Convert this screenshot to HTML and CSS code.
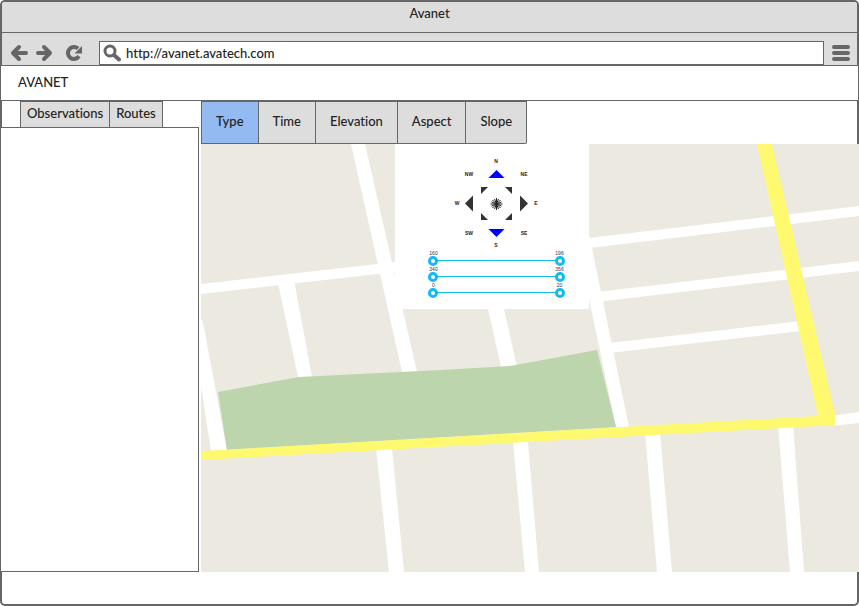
FILE: index.html
```html
<!DOCTYPE html>
<html lang="en">
<head>
<meta charset="utf-8">
<title>Avanet</title>
<link rel="stylesheet" href="styles.css">
</head>
<body>
<div class="window">
  <div class="titlebar">Avanet</div>
  <div class="toolbar">
    <button class="icon-button" type="button" aria-label="Back">
      <svg width="18" height="18" viewBox="0 0 18 18"><path d="M9 3 3 9l6 6M4 9h12" class="arrow"/></svg>
    </button>
    <button class="icon-button" type="button" aria-label="Forward">
      <svg width="18" height="18" viewBox="0 0 18 18"><path d="M9 3l6 6-6 6M14 9H3" class="arrow"/></svg>
    </button>
    <button class="icon-button reload" type="button" aria-label="Reload">
      <svg width="18" height="18" viewBox="0 0 18 18"><path d="M13 4.500A6 6 0 1 0 14 12.200" class="loop"/><path d="M17 2v7.500H9.500z" class="solid"/></svg>
    </button>
    <div class="address">
      <svg width="18" height="18" viewBox="0 0 18 18"><circle cx="7" cy="7" r="5" class="lens"/><path d="m11 11 5 4.500" class="handle"/></svg>
      <input type="text" aria-label="Address" value="http://avanet.avatech.com">
    </div>
    <button class="icon-button" type="button" aria-label="Menu">
      <svg width="18" height="18" viewBox="0 0 18 18"><path d="M2 3h14M2 9h14M2 15h14" class="bars"/></svg>
    </button>
  </div>
  <header class="site-header">AVANET</header>
  <main class="workspace">
    <aside class="sidebar">
      <nav class="side-tabs">
        <button class="side-tab" type="button">Observations</button>
        <button class="side-tab" type="button">Routes</button>
      </nav>
      <div class="side-panel"></div>
    </aside>
    <section class="content">
      <nav class="filter-tabs">
        <button class="filter-tab active" type="button">Type</button>
        <button class="filter-tab" type="button">Time</button>
        <button class="filter-tab" type="button">Elevation</button>
        <button class="filter-tab" type="button">Aspect</button>
        <button class="filter-tab" type="button">Slope</button>
      </nav>
      <div class="map">
        <svg class="map-drawing" viewBox="0 0 658 428" preserveAspectRatio="xMinYMin slice" role="img" aria-label="Street map">
          <rect width="658" height="428" fill="#ece9e1"/>
          <g fill="#fff">
            <path d="M150 0h14l52 228h-15z"/>
            <path d="M0 140 194 118v10L0 150z"/>
            <path d="M77 139l16-3 18 97H97z"/>
            <path d="M0 175l2 3 24 129H10L0 242z"/>
            <path d="M287 165h16l13 58h-16z"/>
            <path d="M388 90l40 193h-13L388 155z"/>
            <path d="M388 94 658 62v10L388 104z"/>
            <path d="M396 148 658 117v10L396 158z"/>
            <path d="M408 199 600 177v10L408 209z"/>
            <path d="M175 304h16l12 124h-15z"/>
            <path d="M312 298h15l11 130h-14z"/>
            <path d="M444 288h15l12 140h-15z"/>
            <path d="M577 280h15l11 148h-14z"/>
            <path d="M630 272l28-4v11l-28 3z"/>
          </g>
          <path d="M17 248 98 233 240 226l69-4 87-16 19 77L26 306z" fill="#bcd5ac"/>
          <path d="M0 307 617 272 556 0h15l63 270v12l-16 0L0 316z" fill="#fff96f"/>
        </svg>
        <div class="filter-panel">
          <svg class="compass" width="194" height="106" viewBox="0 0 194 106" role="img" aria-label="Aspect compass">
            <g fill="#00f"><path d="M101.500 26 109.500 34h-16z"/><path d="M93.500 85h16l-8 8z"/></g>
            <g fill="#333">
              <path d="M70 59.500 78 51.500v16z"/><path d="M133 59.500 125 51.500v16z"/>
              <path d="M86 43h7l-7 7z"/><path d="M110 43h7v7z"/><path d="M86 69v7h7z"/><path d="M117 69v7h-7z"/>
            </g>
            <path d="M101.500 54v12M95.500 60h12M97.500 56l8 8M105.500 56l-8 8M99.500 55l4 10M103.500 55l-4 10M96.500 58l10 4M96.500 62l10-4" class="star"/>
            <g class="points">
              <text x="101" y="19">N</text><text x="74" y="32">NW</text><text x="129" y="32">NE</text>
              <text x="62" y="61">W</text><text x="141" y="61">E</text>
              <text x="74" y="91">SW</text><text x="129" y="91">SE</text><text x="101" y="103">S</text>
            </g>
          </svg>
          <div class="ranges">
            <div class="range"><span>160</span><span>196</span><input type="range" min="160" max="196" value="160" aria-label="First range, from"><input type="range" min="160" max="196" value="196" aria-label="First range, to"></div>
            <div class="range"><span>340</span><span>356</span><input type="range" min="340" max="356" value="340" aria-label="Second range, from"><input type="range" min="340" max="356" value="356" aria-label="Second range, to"></div>
            <div class="range"><span>0</span><span>20</span><input type="range" min="0" max="20" value="0" aria-label="Third range, from"><input type="range" min="0" max="20" value="20" aria-label="Third range, to"></div>
          </div>
        </div>
      </div>
    </section>
  </main>
</div>
</body>
</html>
```
FILE: styles.css
```css
* { box-sizing: border-box; }

body {
  margin: 0;
  background: #fff;
  color: #222;
  font: 500 13px/16px Lato, "Liberation Sans", sans-serif;
  font-variant-ligatures: none;
}

button, input { font: inherit; font-variant-ligatures: none; color: inherit; margin: 0; }
svg { display: block; }

.window {
  display: flex;
  flex-direction: column;
  min-height: 100vh;
  padding-bottom: 32px;
  border: 2px solid #666;
  border-radius: 5px;
}

.titlebar {
  height: 31px;
  padding-top: 3px;
  border-bottom: 1px solid #666;
  border-radius: 3px 3px 0 0;
  background: #ddd;
  text-align: center;
}

.toolbar {
  display: flex;
  height: 32px;
  padding: 8px 7px 0 8px;
  background: #ddd;
}

.icon-button {
  width: 18px;
  height: 24px;
  margin-right: 7px;
  padding: 0;
  border: 0;
  background: none;
}

.icon-button.reload { margin: 0 16px 0 5px; }
.icon-button:last-child { margin: 0 0 0 8px; }

.arrow, .loop, .lens, .handle, .bars { fill: none; stroke: #666; }
.arrow { stroke-width: 4; stroke-linecap: round; stroke-linejoin: round; }
.loop { stroke-width: 4; }
.solid { fill: #666; }
.lens { stroke-width: 3; }
.handle { stroke-width: 4; stroke-linecap: round; }
.bars { stroke-width: 4; stroke-linecap: round; }

.address {
  display: flex;
  flex: 1;
  align-items: center;
  gap: 5px;
  height: 24px;
  padding-left: 3px;
  border: 1px solid #666;
  background: #fff;
}

.address input {
  flex: 1;
  min-width: 0;
  height: 22px;
  padding: 0;
  border: 0;
  outline: 0;
  background: none;
}

.site-header {
  height: 36px;
  margin: 0 -2px;
  padding: 8px 17px;
  border: 1px solid #666;
  background: #fff;
}

.workspace {
  display: flex;
  flex: 1;
  gap: 2px;
  margin: 0 -2px;
}

.sidebar {
  display: flex;
  flex-direction: column;
  width: 199px;
}

.side-tabs { display: flex; padding-left: 20px; }

.side-tab {
  height: 26px;
  padding: 0 6px 3px;
  border: 1px solid #666;
  border-width: 1px 1px 0 0;
  background: #ddd;
}

.side-tab:first-child { border-left-width: 1px; }

.side-panel {
  flex: 1;
  border: 1px solid #666;
  background: #fff;
}

.content { display: flex; flex: 1; flex-direction: column; }
.filter-tabs { display: flex; }

.filter-tab {
  height: 43px;
  padding: 0 14px 3px;
  border: 1px solid #666;
  border-left-width: 0;
  background: #ddd;
}

.filter-tab:first-child { border-left-width: 1px; }
.filter-tab:last-child { border-radius: 0 0 2px 0; }
.filter-tab.active { background: #94baf2; }

.map { position: relative; flex: 1; min-height: 428px; overflow: hidden; background: #ece9e1; }
.map-drawing { position: absolute; width: 100%; height: 100%; }

.filter-panel {
  position: absolute;
  top: 0;
  left: 194px;
  width: 194px;
  height: 165px;
  background: #fff;
}

.star { fill: none; stroke: #222; }

.points {
  fill: #222;
  font: bold 5px "Liberation Sans", sans-serif;
  text-anchor: middle;
}

.ranges { padding: 0 24px 0 33px; }

.range {
  position: relative;
  display: flex;
  justify-content: space-between;
  height: 16px;
  font: 5px/6px "Liberation Sans", sans-serif;
  color: #335;
}

.range span { width: 11px; text-align: center; }

.range::before {
  content: "";
  position: absolute;
  top: 10px;
  right: 5px;
  left: 5px;
  height: 1px;
  background: #12b9f2;
}

.range input {
  position: absolute;
  top: 5px;
  left: 0;
  width: 100%;
  height: 11px;
  appearance: none;
  background: none;
  pointer-events: none;
}

.range input::-webkit-slider-thumb {
  width: 10px;
  height: 10px;
  appearance: none;
  border: 3px solid #12b9f2;
  border-radius: 50%;
  background: #fff;
  pointer-events: auto;
}
```
